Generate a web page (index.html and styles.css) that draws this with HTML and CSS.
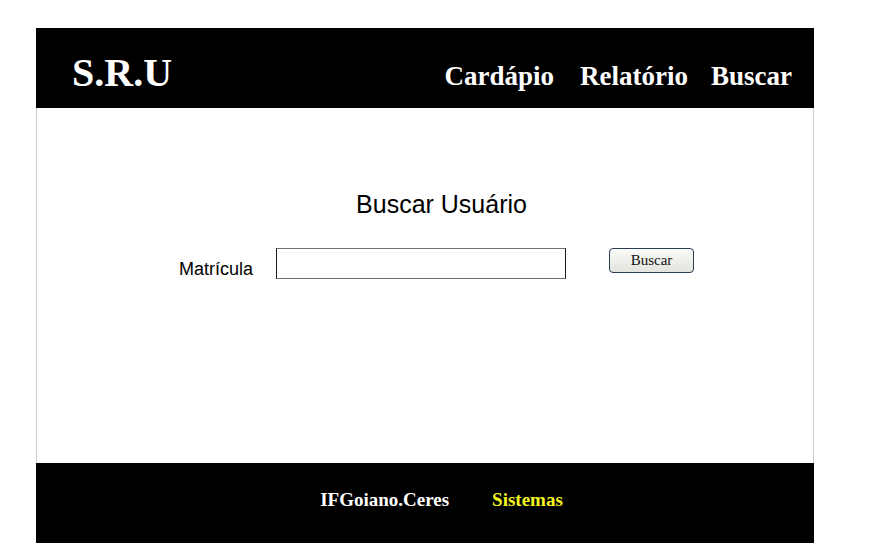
FILE: index.html
```html
<!DOCTYPE html>
<html lang="pt-BR">
<head>
<meta charset="utf-8">
<title>S.R.U - Buscar Usuário</title>
<link rel="stylesheet" href="styles.css">
</head>
<body>
<div class="page">
  <header class="topbar">
    <div class="logo">S.R.U</div>
    <nav class="menu">
      <a class="menu-link menu-cardapio" href="#">Cardápio</a>
      <a class="menu-link menu-relatorio" href="#">Relatório</a>
      <a class="menu-link" href="#">Buscar</a>
    </nav>
  </header>
  <main class="content">
    <h1 class="title">Buscar Usuário</h1>
    <form class="search-form">
      <label class="field-label" for="matricula">Matrícula</label>
      <input class="field-input" id="matricula" type="text">
      <button class="field-button" type="button">Buscar</button>
    </form>
  </main>
  <footer class="bottombar">
    <span class="foot-org">IFGoiano.Ceres</span>
    <span class="foot-sys">Sistemas</span>
  </footer>
</div>
</body>
</html>
```

FILE: styles.css
```css
html, body {
  margin: 0;
  padding: 0;
  background: #ffffff;
}

.page {
  width: 778px;
  margin: 28px 0 0 36px;
}

.topbar {
  height: 80px;
  background: #000000;
  display: flex;
  align-items: flex-start;
  justify-content: space-between;
  padding: 0 22px 0 36px;
  box-sizing: border-box;
  font-family: "Liberation Serif", "Times New Roman", serif;
  font-weight: bold;
  color: #ffffff;
}

.logo {
  font-size: 40px;
  line-height: 40px;
  margin-top: 25px;
  letter-spacing: 0;
}

.menu {
  display: flex;
  margin-top: 35px;
}

.menu-link {
  color: #ffffff;
  text-decoration: none;
  font-size: 27px;
  line-height: 27px;
}

.menu-cardapio {
  margin-right: 26px;
}

.menu-relatorio {
  margin-right: 23px;
}

.content {
  height: 355px;
  box-sizing: border-box;
  border-left: 1px solid #cccccc;
  border-right: 1px solid #cccccc;
  padding: 82px 0 0 33px;
  font-family: "Liberation Sans", Arial, sans-serif;
  color: #000000;
}

.title {
  margin: 0;
  font-size: 25px;
  font-weight: normal;
  line-height: 29px;
  text-align: center;
}

.search-form {
  display: flex;
  align-items: flex-start;
  margin: 29px 0 0 109px;
}

.field-label {
  font-size: 18px;
  line-height: 21px;
  margin-top: 11px;
  margin-right: 23px;
}

.field-input {
  width: 290px;
  height: 31px;
  box-sizing: border-box;
  margin: 0 43px 0 0;
  padding: 0 4px;
  border: 1px solid #1a1a1a;
  border-top-color: #707070;
  border-bottom-color: #707070;
  border-radius: 0;
  background: #ffffff;
}

.field-button {
  width: 85px;
  height: 25px;
  box-sizing: border-box;
  margin: 0;
  padding: 0;
  border: 1px solid #2c3d58;
  border-radius: 4px;
  background: linear-gradient(#fafaf8, #e4e4de);
  font-family: "Liberation Serif", "Times New Roman", serif;
  font-size: 15px;
  line-height: 21px;
  color: #111111;
}

.bottombar {
  height: 80px;
  background: #000000;
  display: flex;
  justify-content: center;
  align-items: flex-start;
  gap: 43px;
  padding: 26px 0 0 33px;
  box-sizing: border-box;
  font-family: "Liberation Serif", "Times New Roman", serif;
  font-weight: bold;
  font-size: 19px;
  line-height: 22px;
}

.foot-org {
  color: #ffffff;
}

.foot-sys {
  color: #f5f51e;
}
```
